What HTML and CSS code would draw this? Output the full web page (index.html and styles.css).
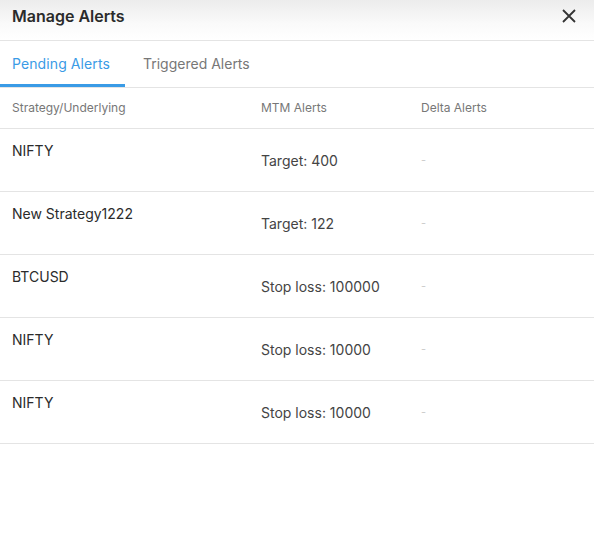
FILE: index.html
```html
<!DOCTYPE html>
<html lang="en">
<head>
    <meta charset="UTF-8">
    <meta name="viewport" content="width=device-width, initial-scale=1.0">
    <title>Manage Alerts</title>
    <link rel="stylesheet" href="styles.css">
</head>
<body>
    <div class="modal">
        <div class="modal-header">
            <h2 class="modal-title">Manage Alerts</h2>
            <button class="close-btn" aria-label="Close">
                <svg width="14" height="14" viewBox="0 0 14 14">
                    <path d="M1 1 L13 13 M13 1 L1 13" stroke="#333" stroke-width="1.8" fill="none"/>
                </svg>
            </button>
        </div>
        <div class="tabs">
            <div class="tab active">Pending Alerts</div>
            <div class="tab">Triggered Alerts</div>
        </div>
        <table class="alerts">
            <thead>
                <tr>
                    <th class="col-name">Strategy/Underlying</th>
                    <th class="col-mtm">MTM Alerts</th>
                    <th>Delta Alerts</th>
                </tr>
            </thead>
            <tbody>
                <tr>
                    <td class="col-name">NIFTY</td>
                    <td class="col-mtm">Target: 400</td>
                    <td class="empty">-</td>
                </tr>
                <tr>
                    <td class="col-name">New Strategy1222</td>
                    <td class="col-mtm">Target: 122</td>
                    <td class="empty">-</td>
                </tr>
                <tr>
                    <td class="col-name">BTCUSD</td>
                    <td class="col-mtm">Stop loss: 100000</td>
                    <td class="empty">-</td>
                </tr>
                <tr>
                    <td class="col-name">NIFTY</td>
                    <td class="col-mtm">Stop loss: 10000</td>
                    <td class="empty">-</td>
                </tr>
                <tr>
                    <td class="col-name">NIFTY</td>
                    <td class="col-mtm">Stop loss: 10000</td>
                    <td class="empty">-</td>
                </tr>
            </tbody>
        </table>
    </div>
</body>
</html>
```

FILE: styles.css
```css
body {
    margin: 0;
    padding: 0;
    font-family: 'Inter', 'Liberation Sans', sans-serif;
    background: #fff;
    color: #333;
}

.modal {
    width: 594px;
    min-height: 557px;
    background: #fff;
}

.modal-header {
    display: flex;
    justify-content: space-between;
    align-items: center;
    height: 41px;
    padding: 0 12px;
    box-sizing: border-box;
    background: linear-gradient(180deg, #ececec 0%, #fafafa 60%, #fff 100%);
    border-bottom: 1px solid #e4e4e4;
}

.modal-title {
    margin: 0 0 8px 0;
    font-size: 16px;
    font-weight: 600;
    color: #2b2b2b;
}

.close-btn {
    background: none;
    border: none;
    padding: 0;
    margin: 0 6px 8px 0;
    width: 14px;
    height: 14px;
    cursor: pointer;
    display: flex;
}

.tabs {
    display: flex;
    height: 47px;
    border-bottom: 1px solid #e4e4e4;
    box-sizing: border-box;
}

.tab {
    font-size: 14px;
    color: #777;
    padding: 14px 9px 0 12px;
    box-sizing: border-box;
    height: 46px;
    margin-right: 6px;
}

.tab.active {
    color: #3a9be6;
    border-bottom: 3px solid #3a9be6;
    padding-right: 15px;
    letter-spacing: 0.1px;
}

.alerts {
    width: 100%;
    border-collapse: collapse;
}

.alerts th {
    text-align: left;
    font-size: 12px;
    font-weight: 400;
    color: #777;
    height: 40px;
    padding: 0 12px 1px 12px;
    box-sizing: border-box;
    border-bottom: 1px solid #e4e4e4;
}

.alerts td {
    font-size: 14px;
    color: #333;
    height: 63px;
    padding: 0 12px;
    box-sizing: border-box;
    border-bottom: 1px solid #e4e4e4;
    vertical-align: middle;
}

.alerts .col-name {
    width: 249px;
}

.alerts .col-mtm {
    width: 160px;
}

.alerts td.col-name {
    vertical-align: top;
    padding-top: 13px;
    color: #2b2b2b;
}

.alerts td.col-mtm {
    padding-top: 2px;
    color: #444;
}

.alerts td.empty {
    color: #ccc;
    font-size: 11px;
}
```
